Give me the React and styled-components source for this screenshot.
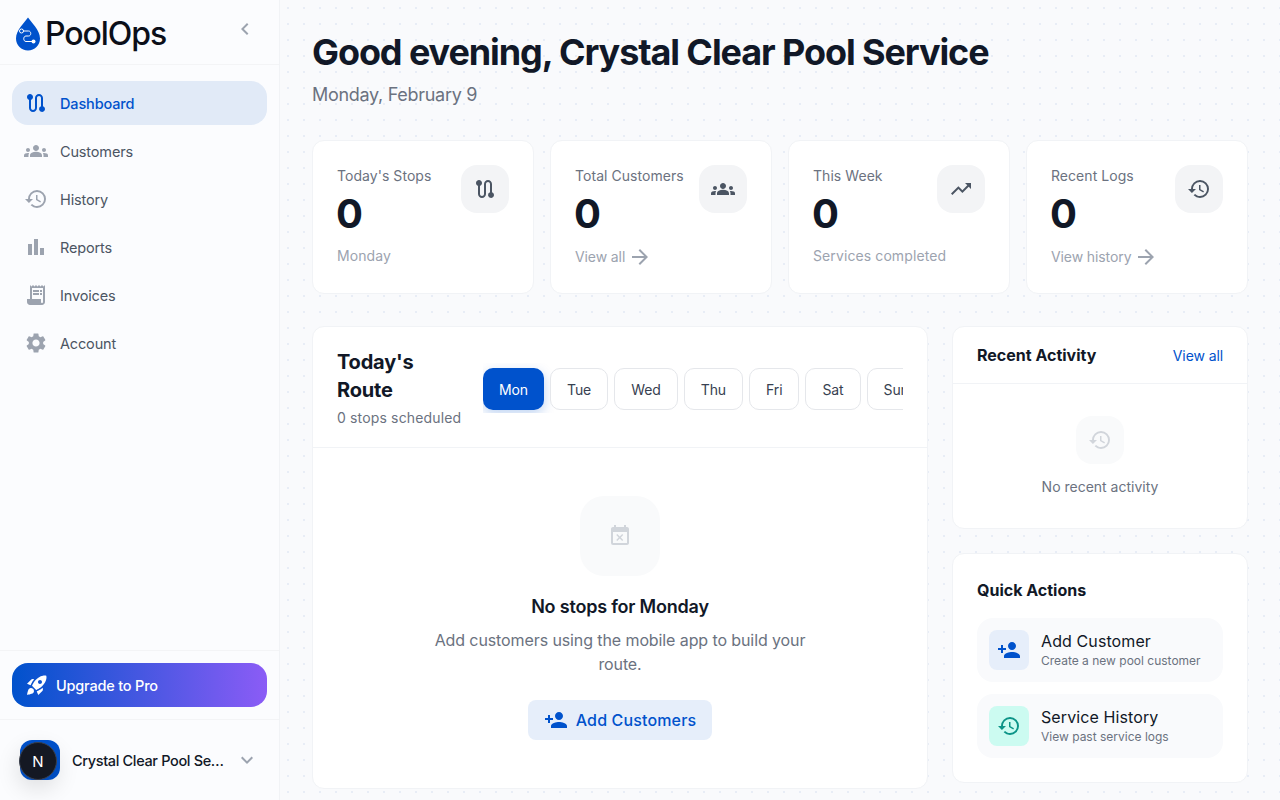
import React from "react";
import styled, { createGlobalStyle } from "styled-components";
import {
  MdRoute,
  MdGroups,
  MdHistory,
  MdBarChart,
  MdReceiptLong,
  MdSettings,
  MdTrendingUp,
  MdArrowForward,
  MdEventBusy,
  MdPersonAdd,
  MdRocketLaunch,
  MdChevronLeft,
  MdExpandMore,
} from "react-icons/md";

const navItems = [
  { label: "Dashboard", icon: MdRoute, active: true },
  { label: "Customers", icon: MdGroups },
  { label: "History", icon: MdHistory },
  { label: "Reports", icon: MdBarChart },
  { label: "Invoices", icon: MdReceiptLong },
  { label: "Account", icon: MdSettings },
];

const stats = [
  { label: "Today's Stops", icon: MdRoute, note: "Monday" },
  { label: "Total Customers", icon: MdGroups, link: "View all" },
  { label: "This Week", icon: MdTrendingUp, note: "Services completed" },
  { label: "Recent Logs", icon: MdHistory, link: "View history" },
];

const days = ["Mon", "Tue", "Wed", "Thu", "Fri", "Sat", "Sun"];

const Logo = () => (
  <LogoSvg width="26" height="34" viewBox="0 0 26 34">
    <path
      d="M13 0.5C10 5 1 13 1 21.5C1 28.4 6.4 33.5 13 33.5C19.6 33.5 25 28.4 25 21.5C25 13 16 5 13 0.5Z"
      fill="#0052cc"
    />
    <path
      d="M7 14H13.5C16.5 14 16.5 19 13.5 19H11C8 19 8 24.5 11 24.5H18"
      fill="none"
      stroke="#fff"
      strokeWidth="1"
    />
    <circle cx="6.5" cy="14" r="2" fill="#0052cc" stroke="#fff" strokeWidth="1" />
    <circle cx="18.5" cy="24.5" r="2" fill="#fff" />
  </LogoSvg>
);

const App = () => (
  <>
    <GlobalStyle />
    <Layout>
      <Sidebar>
        <Brand>
          <BrandMark>
            <Logo />
            <BrandName>PoolOps</BrandName>
          </BrandMark>
          <CollapseIcon>
            <MdChevronLeft size={24} />
          </CollapseIcon>
        </Brand>
        <Nav>
          {navItems.map((item) => (
            <NavItem key={item.label} $active={item.active}>
              <item.icon size={24} />
              {item.label}
            </NavItem>
          ))}
        </Nav>
        <UpgradeArea>
          <UpgradeButton>
            <MdRocketLaunch size={24} />
            Upgrade to Pro
          </UpgradeButton>
        </UpgradeArea>
        <UserRow>
          <Avatar>
            <DevBadge>N</DevBadge>
          </Avatar>
          <UserName>Crystal Clear Pool Service</UserName>
          <UserChevron>
            <MdExpandMore size={24} />
          </UserChevron>
        </UserRow>
      </Sidebar>

      <Main>
        <Greeting>Good evening, Crystal Clear Pool Service</Greeting>
        <DateLine>Monday, February 9</DateLine>

        <StatsGrid>
          {stats.map((stat) => (
            <StatCard key={stat.label}>
              <StatTop>
                <div>
                  <StatLabel>{stat.label}</StatLabel>
                  <StatValue>0</StatValue>
                </div>
                <StatIcon>
                  <stat.icon size={24} />
                </StatIcon>
              </StatTop>
              {stat.note && <StatNote>{stat.note}</StatNote>}
              {stat.link && (
                <StatLink>
                  {stat.link}
                  <MdArrowForward size={24} />
                </StatLink>
              )}
            </StatCard>
          ))}
        </StatsGrid>

        <Columns>
          <RoutePanel>
            <RouteHeader>
              <RouteTitleBlock>
                <RouteTitle>Today's Route</RouteTitle>
                <RouteSub>0 stops scheduled</RouteSub>
              </RouteTitleBlock>
              <DayTabs>
                {days.map((day, i) => (
                  <DayTab key={day} $active={i === 0}>
                    {day}
                  </DayTab>
                ))}
              </DayTabs>
            </RouteHeader>
            <EmptyRoute>
              <EmptyIcon>
                <MdEventBusy size={24} />
              </EmptyIcon>
              <EmptyTitle>No stops for Monday</EmptyTitle>
              <EmptyText>Add customers using the mobile app to build your route.</EmptyText>
              <AddButton>
                <MdPersonAdd size={24} />
                Add Customers
              </AddButton>
            </EmptyRoute>
          </RoutePanel>

          <SideColumn>
            <ActivityPanel>
              <ActivityHeader>
                <PanelTitle>Recent Activity</PanelTitle>
                <ViewAll>View all</ViewAll>
              </ActivityHeader>
              <ActivityEmpty>
                <ActivityIcon>
                  <MdHistory size={24} />
                </ActivityIcon>
                <ActivityText>No recent activity</ActivityText>
              </ActivityEmpty>
            </ActivityPanel>

            <ActionsPanel>
              <PanelTitle>Quick Actions</PanelTitle>
              <ActionList>
                <ActionRow>
                  <ActionIcon $bg="#e6eefa" $color="#0052cc">
                    <MdPersonAdd size={24} />
                  </ActionIcon>
                  <div>
                    <ActionName>Add Customer</ActionName>
                    <ActionSub>Create a new pool customer</ActionSub>
                  </div>
                </ActionRow>
                <ActionRow>
                  <ActionIcon $bg="#ccfbf1" $color="#0d9488">
                    <MdHistory size={24} />
                  </ActionIcon>
                  <div>
                    <ActionName>Service History</ActionName>
                    <ActionSub>View past service logs</ActionSub>
                  </div>
                </ActionRow>
              </ActionList>
            </ActionsPanel>
          </SideColumn>
        </Columns>
      </Main>
    </Layout>
  </>
);

export default App;

const GlobalStyle = createGlobalStyle`
  html, body {
    margin: 0;
    height: 100%;
    overflow: hidden;
  }
  body {
    font-family: Inter, "Noto Sans", sans-serif;
    color: #111827;
  }
  * {
    box-sizing: border-box;
  }
`;

const Layout = styled.div`
  display: flex;
  height: 100vh;
`;

const Sidebar = styled.aside`
  width: 280px;
  flex-shrink: 0;
  display: flex;
  flex-direction: column;
  background: #fbfcfe;
  border-right: 1px solid #f1f3f6;
`;

const Brand = styled.div`
  height: 65px;
  padding: 0 22px 0 15px;
  display: flex;
  align-items: center;
  justify-content: space-between;
  border-bottom: 1px solid #f3f4f6;
`;

const BrandMark = styled.div`
  display: flex;
  align-items: center;
  gap: 4px;
  padding-top: 2px;
`;

const LogoSvg = styled.svg`
  display: block;
  margin-top: 1px;
`;

const BrandName = styled.span`
  font-size: 32px;
  font-weight: 500;
  color: #0b0f19;
  letter-spacing: -1.05px;
`;

const CollapseIcon = styled.span`
  display: flex;
  color: #9ca3af;
  margin-top: -7px;
`;

const Nav = styled.nav`
  flex: 1;
  display: flex;
  flex-direction: column;
  gap: 4px;
  padding: 16px 12px;
`;

const NavItem = styled.a`
  height: 44px;
  padding: 0 12px;
  display: flex;
  align-items: center;
  gap: 12px;
  border-radius: 16px;
  font-size: 14.5px;
  letter-spacing: -0.15px;
  font-weight: ${(p) => (p.$active ? 500 : 400)};
  background: ${(p) => (p.$active ? "#e1eaf7" : "transparent")};
  color: ${(p) => (p.$active ? "#0052cc" : "#4b5563")};

  svg {
    color: ${(p) => (p.$active ? "#0052cc" : "#9ca3af")};
  }
`;

const UpgradeArea = styled.div`
  padding: 12px;
  border-top: 1px solid #f3f4f6;
  border-bottom: 1px solid #f3f4f6;
`;

const UpgradeButton = styled.div`
  height: 44px;
  padding: 0 13px;
  display: flex;
  align-items: center;
  gap: 7px;
  border-radius: 16px;
  background: linear-gradient(90deg, #0052cc, #8b5cf6);
  color: #fff;
  font-size: 14.5px;
  letter-spacing: -0.2px;
  font-weight: 500;
`;

const UserRow = styled.div`
  height: 80px;
  padding: 0 20px;
  display: flex;
  align-items: center;
  gap: 12px;
`;

const Avatar = styled.div`
  position: relative;
  width: 40px;
  height: 40px;
  flex-shrink: 0;
  border-radius: 12px;
  background: #0052cc;
`;

const DevBadge = styled.div`
  position: absolute;
  left: -1px;
  top: 2px;
  width: 38px;
  height: 38px;
  display: flex;
  align-items: center;
  justify-content: center;
  border-radius: 50%;
  background: #141823;
  border: 1px solid #3a3f4b;
  box-shadow: 0 8px 24px rgba(0, 0, 0, 0.14);
  color: #fff;
  font-size: 15px;
  font-weight: 400;
`;

const UserName = styled.span`
  flex: 1;
  min-width: 0;
  white-space: nowrap;
  overflow: hidden;
  text-overflow: ellipsis;
  font-size: 14.5px;
  letter-spacing: -0.35px;
  font-weight: 500;
  color: #111827;
`;

const UserChevron = styled.span`
  display: flex;
  color: #9ca3af;
  margin-left: -6px;
`;

const Main = styled.main`
  flex: 1;
  height: 100vh;
  overflow-y: auto;
  scrollbar-width: none;
  padding: 32px;
  background-color: #f9fafc;
  background-image: radial-gradient(circle at 8px 8px, #e8edf6 1px, transparent 1.2px);
  background-size: 16px 16px;
`;

const Greeting = styled.h1`
  margin: 0;
  font-size: 36px;
  line-height: 40px;
  font-weight: 700;
  letter-spacing: -1.1px;
  color: #111827;
`;

const DateLine = styled.p`
  margin: 11px 0 0;
  font-size: 18px;
  line-height: 24px;
  letter-spacing: -0.3px;
  color: #6b7280;
`;

const StatsGrid = styled.div`
  display: grid;
  grid-template-columns: repeat(4, 1fr);
  gap: 16px;
  margin-top: 33px;
`;

const StatCard = styled.div`
  height: 154px;
  padding: 24px;
  background: #fff;
  border: 1px solid #f1f3f6;
  border-radius: 12px;
`;

const StatTop = styled.div`
  display: flex;
  justify-content: space-between;
  align-items: flex-start;
`;

const StatLabel = styled.div`
  margin-top: 1px;
  font-size: 14px;
  line-height: 20px;
  letter-spacing: 0.05px;
  color: #6b7280;
`;

const StatValue = styled.div`
  margin-top: 6px;
  margin-left: -1px;
  font-size: 40px;
  line-height: 44px;
  font-weight: 700;
  color: #111827;
`;

const StatIcon = styled.div`
  width: 48px;
  height: 48px;
  display: flex;
  align-items: center;
  justify-content: center;
  border-radius: 16px;
  background: #f3f4f6;
  color: #4b5563;
`;

const StatNote = styled.div`
  margin-top: 10px;
  font-size: 14px;
  line-height: 20px;
  letter-spacing: 0.1px;
  color: #9ca3af;
`;

const StatLink = styled.div`
  margin-top: 9px;
  display: flex;
  align-items: center;
  gap: 3px;
  font-size: 14px;
  line-height: 24px;
  letter-spacing: -0.1px;
  color: #9ca3af;
`;

const Columns = styled.div`
  display: grid;
  grid-template-columns: 616px 296px;
  gap: 24px;
  align-items: start;
  margin-top: 32px;
`;

const RoutePanel = styled.section`
  background: #fff;
  border: 1px solid #f1f3f6;
  border-radius: 12px;
`;

const RouteHeader = styled.div`
  height: 121px;
  padding: 2px 24px 0;
  display: flex;
  align-items: center;
  gap: 22px;
  border-bottom: 1px solid #f1f3f6;
`;

const RouteTitleBlock = styled.div`
  width: 124px;
  flex-shrink: 0;
`;

const RouteTitle = styled.h2`
  margin: 0;
  font-size: 20px;
  line-height: 28px;
  font-weight: 700;
  letter-spacing: -0.2px;
  color: #111827;
`;

const RouteSub = styled.div`
  margin-top: 4px;
  font-size: 14px;
  line-height: 20px;
  letter-spacing: 0.15px;
  color: #6b7280;
  white-space: nowrap;
`;

const DayTabs = styled.div`
  flex: 1;
  min-width: 0;
  display: flex;
  gap: 6px;
  padding: 5px 0 3px;
  overflow: hidden;
`;

const DayTab = styled.div`
  height: 42px;
  padding: 0 16px;
  flex-shrink: 0;
  display: flex;
  align-items: center;
  border-radius: 10px;
  font-size: 14px;
  font-weight: 400;
  letter-spacing: -0.1px;
  border: ${(p) => (p.$active ? "none" : "1px solid #e5e7eb")};
  background: ${(p) => (p.$active ? "#0052cc" : "#fff")};
  color: ${(p) => (p.$active ? "#fff" : "#374151")};
  box-shadow: ${(p) => (p.$active ? "0 4px 12px rgba(0, 82, 204, 0.25)" : "none")};
`;

const EmptyRoute = styled.div`
  padding: 48px 24px;
  display: flex;
  flex-direction: column;
  align-items: center;
  text-align: center;
`;

const EmptyIcon = styled.div`
  width: 80px;
  height: 80px;
  display: flex;
  align-items: center;
  justify-content: center;
  border-radius: 24px;
  background: #f9fafb;
  color: #d1d5db;
`;

const EmptyTitle = styled.h3`
  margin: 18px 0 0;
  font-size: 18px;
  line-height: 26px;
  font-weight: 600;
  letter-spacing: -0.2px;
  color: #111827;
`;

const EmptyText = styled.p`
  margin: 8px 0 0;
  max-width: 400px;
  font-size: 16px;
  line-height: 24px;
  letter-spacing: -0.1px;
  color: #6b7280;
`;

const AddButton = styled.div`
  margin-top: 24px;
  height: 40px;
  padding: 0 16px;
  display: flex;
  align-items: center;
  gap: 8px;
  border-radius: 8px;
  background: #e6eefa;
  color: #0052cc;
  font-size: 16px;
  font-weight: 500;
  letter-spacing: 0.15px;
`;

const SideColumn = styled.div`
  display: flex;
  flex-direction: column;
  gap: 24px;
`;

const ActivityPanel = styled.section`
  background: #fff;
  border: 1px solid #f1f3f6;
  border-radius: 12px;
`;

const ActivityHeader = styled.div`
  height: 57px;
  padding: 0 24px;
  display: flex;
  align-items: center;
  justify-content: space-between;
  border-bottom: 1px solid #f1f3f6;
`;

const PanelTitle = styled.h3`
  margin: 0;
  font-size: 16px;
  line-height: 24px;
  font-weight: 700;
  color: #111827;
`;

const ViewAll = styled.a`
  font-size: 14px;
  font-weight: 400;
  letter-spacing: -0.1px;
  color: #0052cc;
`;

const ActivityEmpty = styled.div`
  height: 144px;
  padding-top: 32px;
  display: flex;
  flex-direction: column;
  align-items: center;
`;

const ActivityIcon = styled.div`
  width: 48px;
  height: 48px;
  display: flex;
  align-items: center;
  justify-content: center;
  border-radius: 16px;
  background: #f9fafb;
  color: #d1d5db;
`;

const ActivityText = styled.div`
  margin-top: 13px;
  font-size: 14px;
  line-height: 20px;
  color: #6b7280;
`;

const ActionsPanel = styled.section`
  padding: 24px;
  background: #fff;
  border: 1px solid #f1f3f6;
  border-radius: 12px;
`;

const ActionList = styled.div`
  margin-top: 16px;
  display: flex;
  flex-direction: column;
  gap: 12px;
`;

const ActionRow = styled.div`
  height: 64px;
  padding: 0 12px;
  display: flex;
  align-items: center;
  gap: 12px;
  border-radius: 16px;
  background: #f9fafc;
`;

const ActionIcon = styled.div`
  width: 40px;
  height: 40px;
  display: flex;
  align-items: center;
  justify-content: center;
  border-radius: 8px;
  background: ${(p) => p.$bg};
  color: ${(p) => p.$color};
`;

const ActionName = styled.div`
  font-size: 16px;
  line-height: 20px;
  font-weight: 400;
  letter-spacing: 0.1px;
  color: #111827;
`;

const ActionSub = styled.div`
  margin-top: 2px;
  font-size: 12px;
  line-height: 16px;
  color: #6b7280;
`;
